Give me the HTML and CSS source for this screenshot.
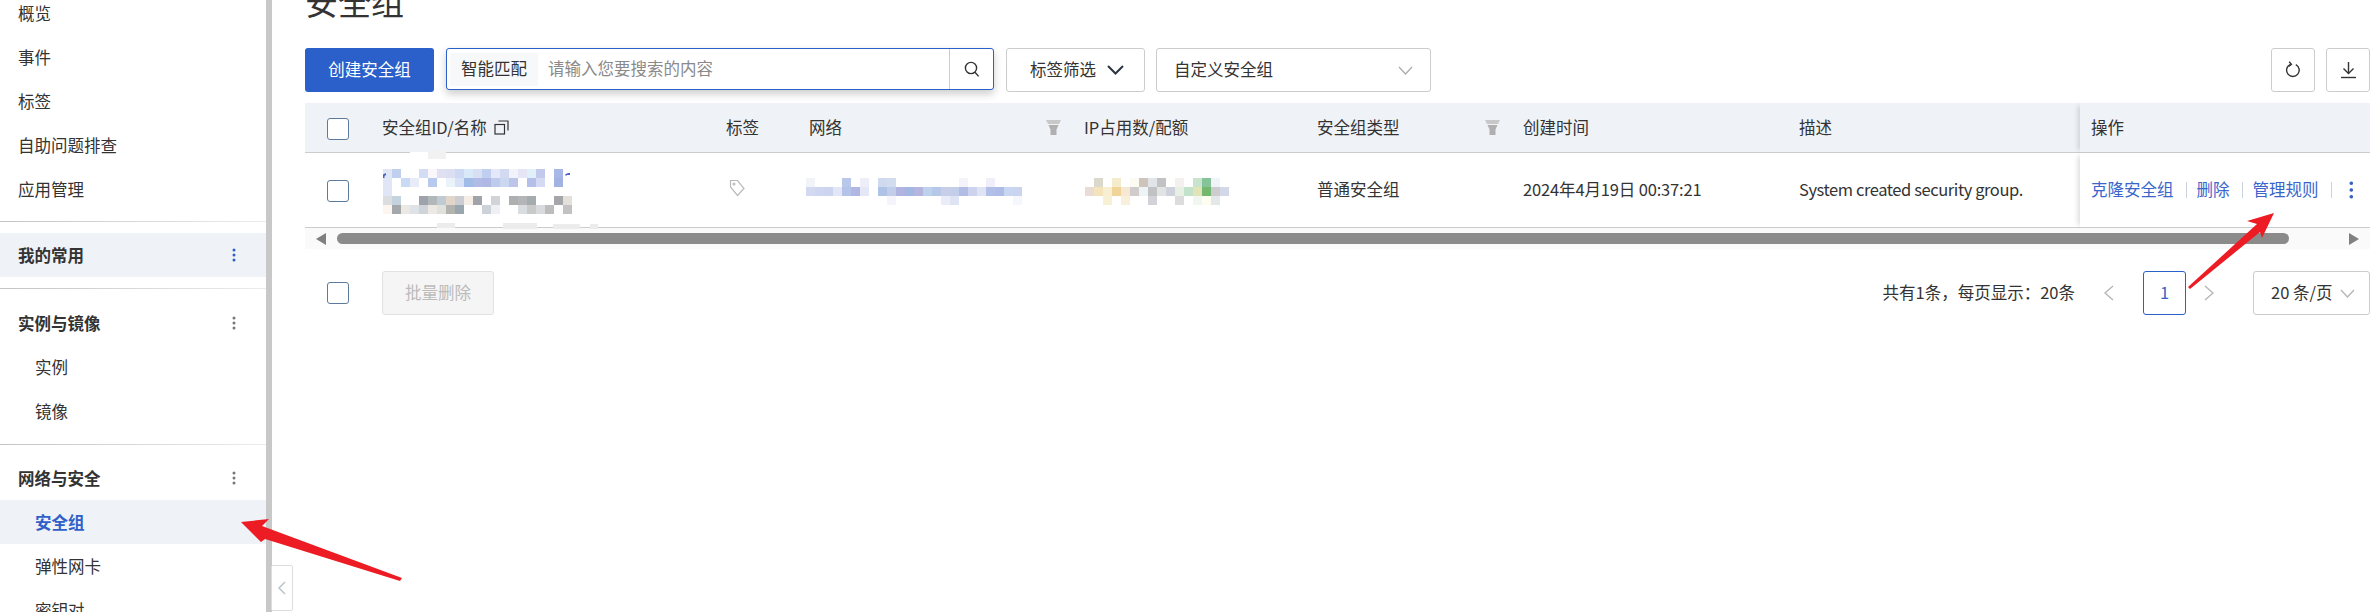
FILE: index.html
```html
<!DOCTYPE html>
<html lang="zh-CN">
<head>
  <meta charset="UTF-8" />
  <title>安全组</title>
  <link rel="stylesheet" href="styles.css">
</head>
<body>

  <div class="sidebar">
    <div class="nav-group first">
      <div class="nav-item">概览</div>
      <div class="nav-item">事件</div>
      <div class="nav-item">标签</div>
      <div class="nav-item">自助问题排查</div>
      <div class="nav-item">应用管理</div>
    </div>
    <div class="nav-sep"></div>
    <div class="nav-group">
      <div class="nav-head pinned">我的常用
        <svg class="kebab" viewBox="0 0 4 14"><circle cx="2" cy="2" r="1.5"/><circle cx="2" cy="7" r="1.5"/><circle cx="2" cy="12" r="1.5"/></svg>
      </div>
    </div>
    <div class="nav-sep"></div>
    <div class="nav-group images">
      <div class="nav-head">实例与镜像
        <svg class="kebab" viewBox="0 0 4 14"><circle cx="2" cy="2" r="1.5"/><circle cx="2" cy="7" r="1.5"/><circle cx="2" cy="12" r="1.5"/></svg>
      </div>
      <div class="nav-item sub">实例</div>
      <div class="nav-item sub">镜像</div>
    </div>
    <div class="nav-sep"></div>
    <div class="nav-group">
      <div class="nav-head">网络与安全
        <svg class="kebab" viewBox="0 0 4 14"><circle cx="2" cy="2" r="1.5"/><circle cx="2" cy="7" r="1.5"/><circle cx="2" cy="12" r="1.5"/></svg>
      </div>
      <div class="nav-item sub active">安全组</div>
      <div class="nav-item sub">弹性网卡</div>
      <div class="nav-item sub">密钥对</div>
    </div>
  </div>
  <div class="side-scroll"></div>

  <div class="collapse-btn">
    <svg width="8" height="14" viewBox="0 0 8 14"><polyline points="7,1 1,7 7,13"/></svg>
  </div>

  <div class="main">
    <h1 class="page-title">安全组</h1>

    <div class="toolbar">
      <button class="btn-primary">创建安全组</button>
      <div class="search">
        <span class="search-tag">智能匹配</span>
        <input class="search-input" type="text" placeholder="请输入您要搜索的内容">
        <span class="search-btn">
          <svg width="16" height="17" viewBox="0 0 16 17"><circle cx="7" cy="7" r="5.6"/><line x1="11" y1="11.2" x2="14.6" y2="15.4"/></svg>
        </span>
      </div>
      <div class="btn-plain tag-filter">标签筛选
        <svg width="17" height="10" viewBox="0 0 17 10"><polyline points="1,1 8.5,8.5 16,1"/></svg>
      </div>
      <div class="btn-plain type-select">自定义安全组
        <svg width="15" height="9" viewBox="0 0 15 9"><polyline points="1,1 7.5,8 14,1"/></svg>
      </div>
      <div class="btn-plain btn-icon push-right">
        <svg width="16" height="18" viewBox="0 0 16 18"><path d="M5 3.6a6.3 6.3 0 1 0 5.8 0"/><polyline points="4.2,0.8 6.4,3.4 3.6,5.4"/></svg>
      </div>
      <div class="btn-plain btn-icon">
        <svg width="17" height="18" viewBox="0 0 17 18"><line x1="8.5" y1="1" x2="8.5" y2="12"/><polyline points="3.5,7.5 8.5,12.5 13.5,7.5"/><line x1="1" y1="16.5" x2="16" y2="16.5"/></svg>
      </div>
    </div>

    <table class="grid">
      <colgroup>
        <col class="c-check"><col class="c-name"><col class="c-tag"><col class="c-net"><col class="c-ip"><col class="c-type"><col class="c-time"><col class="c-desc"><col class="c-op">
      </colgroup>
      <thead>
        <tr>
          <th class="cell-check"><span class="check"></span></th>
          <th>安全组ID/名称
            <svg class="copy-icon" width="15" height="15" viewBox="0 0 15 15"><rect x="1" y="4.5" width="9.5" height="9.5"/><polyline points="4.5,1 14,1 14,10.5"/></svg>
          </th>
          <th>标签</th>
          <th class="has-filter">网络
            <svg class="filter-icon" width="15" height="15" viewBox="0 0 15 15"><path class="f-top" d="M0 0h15l-2 4H2z"/><path d="M2.5 5h10L10.500 9.500v5.500h-6V9.500z"/></svg>
          </th>
          <th>IP占用数/配额</th>
          <th class="has-filter">安全组类型
            <svg class="filter-icon" width="15" height="15" viewBox="0 0 15 15"><path class="f-top" d="M0 0h15l-2 4H2z"/><path d="M2.5 5h10L10.500 9.500v5.500h-6V9.500z"/></svg>
          </th>
          <th>创建时间</th>
          <th>描述</th>
          <th class="cell-op">操作</th>
        </tr>
      </thead>
      <tbody>
        <tr>
          <td class="cell-check"><span class="check"></span></td>
          <td class="cell-blur">
            <svg class="mosaic" width="206" height="74" viewBox="0 0 206 74">
              <path d="M28 -1h36v7H28z" fill="#fff"/>
              <path d="M46 -3h18v9H46z" fill="#f1f1f1"/>
              <path d="M55 70h18v5H55zM121 70h34v6h-34zM171 71h27v5h-27zM208 71h8v5h-8z" fill="#ececec"/>
              <rect x="1" y="16" fill="#e0e6f5"/><rect x="10" y="16" fill="#c0cfee"/><rect x="37" y="16" fill="#d3dcf5"/><rect x="46" y="16" fill="#fbf6fa"/><rect x="55" y="16" fill="#dfe0f2"/><rect x="64" y="16" fill="#dcdff2"/><rect x="73" y="16" fill="#cdd8f2"/><rect x="82" y="16" fill="#d8e9f8"/><rect x="91" y="16" fill="#d8dff2"/><rect x="100" y="16" fill="#c0cff0"/><rect x="109" y="16" fill="#e4e8f8"/><rect x="118" y="16" fill="#d2daf2"/><rect x="127" y="16" fill="#f2f2fa"/><rect x="136" y="16" fill="#e4e6f6"/><rect x="145" y="16" fill="#e0eff8"/><rect x="154" y="16" fill="#c2c9ea"/><rect x="172" y="16" fill="#a8b8e6"/>
              <rect x="1" y="25" fill="#e0e6f5"/><rect x="19" y="25" fill="#c8daf4"/><rect x="28" y="25" fill="#e8ecf8"/><rect x="46" y="25" fill="#b8c9ee"/><rect x="64" y="25" fill="#eaf2fa"/><rect x="73" y="25" fill="#d8e2f6"/><rect x="82" y="25" fill="#a2bce8"/><rect x="91" y="25" fill="#b0bce6"/><rect x="100" y="25" fill="#b0b8e4"/><rect x="109" y="25" fill="#bfcbec"/><rect x="118" y="25" fill="#ccd8f2"/><rect x="127" y="25" fill="#bcc4ea"/><rect x="145" y="25" fill="#b4c0ea"/><rect x="154" y="25" fill="#d4daf2"/><rect x="172" y="25" fill="#a2b2e2"/>
              <rect x="1" y="34" fill="#e0e6f5"/>
              <rect x="1" y="43" fill="#dcdde0"/><rect x="10" y="43" fill="#c4d4de"/><rect x="37" y="43" fill="#9ea3ab"/><rect x="46" y="43" fill="#b2b8ba"/><rect x="55" y="43" fill="#c0cad2"/><rect x="64" y="43" fill="#e2d6ca"/><rect x="73" y="43" fill="#cccdd2"/><rect x="82" y="43" fill="#f6eee6"/><rect x="91" y="43" fill="#a0a4a8"/><rect x="109" y="43" fill="#d2d3d6"/><rect x="127" y="43" fill="#aeafb0"/><rect x="136" y="43" fill="#b4b5b8"/><rect x="145" y="43" fill="#a6acae"/><rect x="172" y="43" fill="#a4a6aa"/><rect x="181" y="43" fill="#e4e0dc"/>
              <rect x="1" y="52" fill="#fdf6f0"/><rect x="10" y="52" fill="#a4a8aa"/><rect x="19" y="52" fill="#ece8e4"/><rect x="28" y="52" fill="#dde3e6"/><rect x="37" y="52" fill="#d0d4da"/><rect x="46" y="52" fill="#ece8e4"/><rect x="55" y="52" fill="#e0e0dc"/><rect x="64" y="52" fill="#b2b2ae"/><rect x="73" y="52" fill="#9aa6ae"/><rect x="100" y="52" fill="#ccd2d8"/><rect x="109" y="52" fill="#eef0f3"/><rect x="136" y="52" fill="#dadde0"/><rect x="145" y="52" fill="#c8c9c8"/><rect x="154" y="52" fill="#d9dade"/><rect x="163" y="52" fill="#bdbdbd"/><rect x="181" y="52" fill="#c2c2c2"/>
              <path d="M1 21.500l3-1.500v2l-1.500 1v2H1zM183 21.500l3-1.500h2v2h-3l-1 1z" fill="#4a63c9"/>
            </svg>
          </td>
          <td>
            <svg class="tag-icon" width="18" height="18" viewBox="0 0 18 18"><path d="M2.500 1.500h7l6.500 8-6.500 7-7-8.500z"/><circle cx="6" cy="5" r="1"/></svg>
          </td>
          <td class="cell-blur">
            <svg class="mosaic" width="206" height="74" viewBox="0 0 206 74">
              <rect x="-3" y="25" fill="#f2f2f9"/><rect x="33" y="25" fill="#b9c8ea"/><rect x="51" y="25" fill="#eeeef8"/><rect x="69" y="25" fill="#cfd9ef"/><rect x="78" y="25" fill="#d2dcef"/><rect x="150" y="25" fill="#f3f3f9"/><rect x="177" y="25" fill="#f0eef8"/>
              <rect x="-3" y="34" fill="#d2d9f1"/><rect x="6" y="34" fill="#ced6f0"/><rect x="15" y="34" fill="#ccd4ef"/><rect x="24" y="34" fill="#e2e6f6"/><rect x="33" y="34" fill="#b4c4e8"/><rect x="42" y="34" fill="#b2b6e2"/><rect x="51" y="34" fill="#e4e8f6"/><rect x="69" y="34" fill="#afc3e6"/><rect x="78" y="34" fill="#c2cdea"/><rect x="87" y="34" fill="#b0b4e0"/><rect x="96" y="34" fill="#a2b8e2"/><rect x="105" y="34" fill="#b4b6e0"/><rect x="114" y="34" fill="#bed2ee"/><rect x="123" y="34" fill="#b5c8e8"/><rect x="132" y="34" fill="#c8cde8"/><rect x="141" y="34" fill="#c3cfea"/><rect x="150" y="34" fill="#b2bce4"/><rect x="159" y="34" fill="#cdd3ee"/><rect x="168" y="34" fill="#dfe4f5"/><rect x="177" y="34" fill="#b2bfe8"/><rect x="186" y="34" fill="#aebde8"/><rect x="195" y="34" fill="#c8d6f2"/><rect x="204" y="34" fill="#cad4ef"/>
              <rect x="78" y="43" fill="#f4f4fa"/><rect x="132" y="43" fill="#eaedf8"/><rect x="141" y="43" fill="#dfe4f5"/><rect x="204" y="43" fill="#f4f8fd"/>
            </svg>
          </td>
          <td class="cell-blur">
            <svg class="mosaic" width="146" height="74" viewBox="0 0 146 74">
              <rect x="10" y="25" fill="#dbd8ce"/><rect x="28" y="25" fill="#f5ebcd"/><rect x="46" y="25" fill="#fbfbf4"/><rect x="55" y="25" fill="#cdc4bc"/><rect x="64" y="25" fill="#e2e5e8"/><rect x="73" y="25" fill="#c2c2c4"/><rect x="91" y="25" fill="#f4f0f0"/><rect x="109" y="25" fill="#c8e4cc"/><rect x="118" y="25" fill="#84c498"/><rect x="127" y="25" fill="#f0f4f8"/>
              <rect x="1" y="34" fill="#e8dcd4"/><rect x="10" y="34" fill="#f5e3bb"/><rect x="19" y="34" fill="#f8eed2"/><rect x="28" y="34" fill="#f0d498"/><rect x="37" y="34" fill="#f6e8d2"/><rect x="46" y="34" fill="#d0cccc"/><rect x="55" y="34" fill="#eef4f6"/><rect x="64" y="34" fill="#c0c2c4"/><rect x="73" y="34" fill="#e2e4e4"/><rect x="82" y="34" fill="#cfd2dc"/><rect x="91" y="34" fill="#e8f0e4"/><rect x="100" y="34" fill="#c2e2cc"/><rect x="109" y="34" fill="#e2e4b8"/><rect x="118" y="34" fill="#74b870"/><rect x="127" y="34" fill="#cdcdd0"/><rect x="136" y="34" fill="#d2d8e8"/>
              <rect x="19" y="43" fill="#f8f0d4"/><rect x="37" y="43" fill="#f8f0da"/><rect x="64" y="43" fill="#d2d2d8"/><rect x="91" y="43" fill="#dcdcdc"/><rect x="109" y="43" fill="#f2f6f0"/><rect x="118" y="43" fill="#fefef0"/><rect x="127" y="43" fill="#e4e8e8"/>
            </svg>
          </td>
          <td>普通安全组</td>
          <td class="cell-time">2024年4月19日 00:37:21</td>
          <td class="cell-desc">System created security group.</td>
          <td class="cell-op">
            <div class="ops">
              <a class="op-link">克隆安全组</a><span class="op-sep"></span>
              <a class="op-link">删除</a><span class="op-sep"></span>
              <a class="op-link">管理规则</a><span class="op-sep"></span>
              <svg class="op-more" viewBox="0 0 5 20"><circle cx="2.500" cy="2.500" r="2"/><circle cx="2.500" cy="10" r="2"/><circle cx="2.500" cy="17.500" r="2"/></svg>
            </div>
          </td>
        </tr>
      </tbody>
    </table>

    <div class="h-scroll">
      <span class="arrow-left"></span>
      <span class="thumb"></span>
      <span class="arrow-right"></span>
    </div>

    <div class="footer">
      <span class="check"></span>
      <div class="btn-disabled">批量删除</div>
      <div class="pager">
        <span class="pager-info">共有1条，每页显示：20条</span>
        <svg class="pager-prev" width="10" height="16" viewBox="0 0 10 16"><polyline points="9,1 1,8 9,15"/></svg>
        <span class="page-num">1</span>
        <svg class="pager-next" width="10" height="16" viewBox="0 0 10 16"><polyline points="1,1 9,8 1,15"/></svg>
        <div class="page-size">20 条/页
          <svg width="15" height="9" viewBox="0 0 15 9"><polyline points="1,1 7.500,8 14,1"/></svg>
        </div>
      </div>
    </div>
  </div>

  <svg class="callouts" width="2370" height="612" viewBox="0 0 2370 612">
    <polygon points="241,522 269,519 262,526 402,578 400,581 265,539 261,542"/>
    <polygon points="2274,213 2247,221 2257,224 2188,287 2190,289 2260,232 2262,238"/>
  </svg>

</body>
</html>
```

FILE: styles.css
```css
html, body {
  height: 100%;
}

body {
  margin: 0;
  display: flex;
  overflow: hidden;
  background: #fff;
  color: #333;
  font-family: "Noto Sans CJK SC", "Noto Sans", sans-serif;
  font-size: 16.5px;
  line-height: 1.2;
}

/* sidebar */
.sidebar {
  width: 266px;
  flex: none;
}

.side-scroll {
  width: 6px;
  flex: none;
  background: #c8c8c8;
}

.nav-group {
  padding: 11px 0;
}

.nav-group.first {
  margin-top: -9px;
  padding: 0 0 10px;
}

.nav-group.images {
  padding-top: 12px;
}

.nav-sep {
  height: 1px;
  background: linear-gradient(to right, #c4c4c4, #ececec);
}

.nav-item,
.nav-head {
  display: flex;
  align-items: center;
  justify-content: space-between;
  height: 44px;
  box-sizing: border-box;
  padding: 2px 30px 0 18px;
}

.nav-head {
  font-weight: 700;
}

.nav-item.sub {
  padding-left: 35px;
}

.nav-item.active {
  background: #eff2f7;
  color: #2f5fc9;
  font-weight: 700;
}

.nav-head.pinned {
  background: #eff2f7;
}

.kebab {
  width: 4px;
  height: 14px;
  margin-top: -2px;
  fill: #777;
}

.pinned .kebab {
  fill: #2f5fc9;
}

.collapse-btn {
  position: absolute;
  left: 271px;
  top: 565px;
  width: 22px;
  height: 46px;
  box-sizing: border-box;
  display: flex;
  align-items: center;
  justify-content: center;
  background: #fff;
  border: 1px solid #ddd;
  border-radius: 2px;
}

.collapse-btn polyline {
  fill: none;
  stroke: #b8c4cc;
  stroke-width: 1.5;
}

/* main */
.main {
  flex: 1;
  min-width: 0;
  padding-left: 33px;
}

.page-title {
  margin: -19px 0 27px;
  height: 40px;
  line-height: 40px;
  font-size: 33px;
  font-weight: 400;
}

.toolbar {
  display: flex;
  align-items: flex-start;
  gap: 11px;
  margin-bottom: 11px;
}

.btn-primary {
  width: 129px;
  height: 44px;
  padding: 0;
  border: 0;
  border-radius: 3px;
  background: #2b5fc9;
  color: #fff;
  font: inherit;
}

.search {
  width: 548px;
  height: 42px;
  margin-left: 1px;
  box-sizing: border-box;
  display: flex;
  align-items: center;
  border: 1.5px solid #2b5fc9;
  border-radius: 3px;
  box-shadow: 0 4px 8px rgba(0, 0, 0, 0.2);
  background: #fff;
}

.search-tag {
  width: 88px;
  height: 33px;
  margin-left: 3px;
  flex: none;
  display: flex;
  align-items: center;
  justify-content: center;
  background: #f7f8fa;
}

.search-input {
  flex: 1;
  min-width: 0;
  padding: 0 0 0 10px;
  border: 0;
  outline: 0;
  background: none;
  color: #333;
  font: inherit;
}

.search-input::placeholder {
  color: #8a8a8a;
  opacity: 1;
}

.search-btn {
  width: 43px;
  height: 100%;
  flex: none;
  display: flex;
  align-items: center;
  justify-content: center;
  border-left: 1px solid #ccc;
}

.search-btn svg {
  fill: none;
  stroke: #333;
  stroke-width: 1.4;
}

.btn-plain {
  height: 44px;
  box-sizing: border-box;
  display: flex;
  align-items: center;
  border: 1px solid #ccc;
  border-radius: 3px;
  background: #fff;
}

.btn-plain svg {
  fill: none;
}

.tag-filter {
  width: 139px;
  margin-left: 1px;
  padding-left: 23px;
  gap: 11px;
}

.tag-filter polyline {
  stroke: #2c3440;
  stroke-width: 2;
}

.type-select {
  width: 275px;
  padding: 0 17px;
  justify-content: space-between;
}

.type-select polyline {
  stroke: #aaa;
  stroke-width: 1.2;
}

.btn-icon {
  width: 44px;
  justify-content: center;
}

.btn-icon svg {
  stroke: #333;
  stroke-width: 1.4;
}

.push-right {
  margin-left: auto;
}

/* table */
.check {
  display: block;
  width: 22px;
  height: 22px;
  flex: none;
  box-sizing: border-box;
  border: 1.5px solid #5b7a9c;
  border-radius: 3px;
  background: #fff;
}

.grid {
  width: 2065px;
  table-layout: fixed;
  border-collapse: separate;
  border-spacing: 0;
}

.c-check { width: 77px; }
.c-name { width: 344px; }
.c-tag { width: 83px; }
.c-net { width: 275px; }
.c-ip { width: 233px; }
.c-type { width: 206px; }
.c-time { width: 276px; }
.c-desc { width: 281px; }
.c-op { width: 290px; }

.grid th,
.grid td {
  box-sizing: border-box;
  padding: 0;
  text-align: left;
  font-weight: 400;
  white-space: nowrap;
  border-bottom: 1px solid #ccc;
}

.grid th {
  height: 50px;
  background: #eff2f7;
}

.grid td {
  height: 75px;
}

.grid .cell-check {
  padding-left: 22px;
}

.cell-check .check {
  margin-top: 2px;
}

.cell-time {
  letter-spacing: -0.15px;
}

.cell-desc {
  letter-spacing: -0.42px;
}

.grid .cell-op {
  padding-left: 11px;
  background: #fff;
  box-shadow: -5px 0 5px -3px rgba(0, 0, 0, 0.14);
}

.grid th.cell-op {
  background: #eff2f7;
}

.copy-icon {
  margin-left: 3px;
  vertical-align: -1px;
  fill: none;
  stroke: #333;
  stroke-width: 1.2;
}

.has-filter {
  position: relative;
}

.filter-icon {
  position: absolute;
  right: 23px;
  top: 17px;
  fill: #b0b0b0;
}

.filter-icon .f-top {
  fill: #c8c8c8;
}

.tag-icon {
  display: block;
  margin: 0 0 4px 2px;
  fill: none;
  stroke: #bbb;
  stroke-width: 1.2;
}

.mosaic {
  display: block;
  overflow: visible;
}

.mosaic rect {
  width: 9px;
  height: 9px;
}

.ops {
  display: flex;
  align-items: center;
}

.op-link {
  color: #3a66cc;
}

.op-sep {
  width: 1px;
  height: 16px;
  margin: 0 10px 0 12px;
  background: #cdd3dc;
}

.op-more {
  width: 4.5px;
  height: 18px;
  margin-left: 7px;
  fill: #3a5fc4;
}

/* horizontal scrollbar */
.h-scroll {
  width: 2065px;
  height: 21px;
  box-sizing: border-box;
  display: flex;
  align-items: center;
  padding: 0 11px;
  background: #fafafa;
}

.arrow-left,
.arrow-right {
  width: 0;
  height: 0;
  border-top: 6px solid transparent;
  border-bottom: 6px solid transparent;
}

.arrow-left {
  border-right: 10px solid #808080;
}

.arrow-right {
  margin-left: 60px;
  border-left: 10px solid #808080;
}

.thumb {
  flex: 1;
  height: 11px;
  margin-left: 11px;
  border-radius: 6px;
  background: #8b8b8b;
}

/* footer */
.footer {
  width: 2065px;
  display: flex;
  align-items: center;
  margin-top: 22px;
  padding-left: 22px;
  box-sizing: border-box;
}

.btn-disabled {
  width: 112px;
  height: 44px;
  margin-left: 33px;
  box-sizing: border-box;
  display: flex;
  align-items: center;
  justify-content: center;
  border: 1px solid #e2e2e2;
  border-radius: 3px;
  background: #f5f5f5;
  color: #bbb;
}

.pager {
  display: flex;
  align-items: center;
  margin-left: auto;
}

.pager svg {
  fill: none;
  stroke: #b4b4b4;
  stroke-width: 1.3;
}

.pager-prev {
  margin-left: 29px;
}

.pager-next {
  margin-left: 18px;
}

.page-num {
  width: 43px;
  height: 44px;
  margin-left: 29px;
  box-sizing: border-box;
  display: flex;
  align-items: center;
  justify-content: center;
  border: 1.5px solid #2b5fc9;
  border-radius: 3px;
  color: #3a5fc4;
}

.page-size {
  width: 117px;
  height: 44px;
  margin-left: 39px;
  padding: 0 14px 0 17px;
  box-sizing: border-box;
  display: flex;
  align-items: center;
  justify-content: space-between;
  border: 1px solid #ccc;
  border-radius: 3px;
}

/* red arrows drawn over the screenshot */
.callouts {
  position: absolute;
  left: 0;
  top: 0;
  fill: #ed1c24;
  pointer-events: none;
}
```
